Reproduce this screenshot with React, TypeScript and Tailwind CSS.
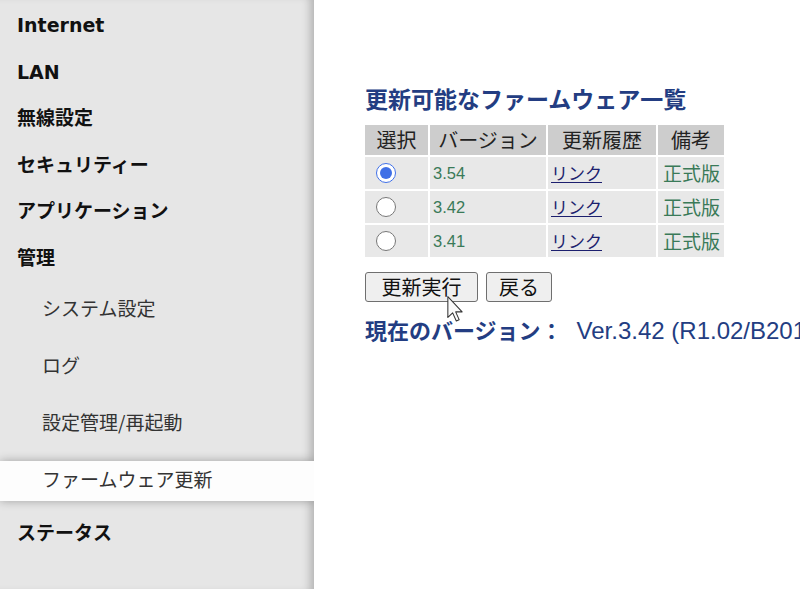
const topItems = ["Internet", "LAN", "無線設定", "セキュリティー", "アプリケーション", "管理"]
const subItems = ["システム設定", "ログ", "設定管理/再起動", "ファームウェア更新"]

const firmwares = [
  { ver: "3.54", checked: true },
  { ver: "3.42", checked: false },
  { ver: "3.41", checked: false },
]

function Cursor() {
  return (
    <svg
      className="pointer-events-none absolute left-[447px] top-[296px]"
      width="16"
      height="26"
      viewBox="0 0 12 20"
    >
      <path
        d="M0.5 0.5 L0.5 16.5 L4.2 13 L7 19.2 L9.2 18.2 L6.5 12.2 L11.5 12.2 Z"
        fill="#fafafa"
        stroke="#333"
        strokeWidth="0.8"
        strokeLinejoin="round"
      />
    </svg>
  )
}

export default function App() {
  return (
    <div className="relative flex h-[589px] w-[800px] overflow-hidden bg-white font-['Noto_Sans_CJK_JP',sans-serif]">
      {/* Sidebar */}
      <aside className="h-full w-[314px] shrink-0 overflow-hidden bg-[#e6e6e6] shadow-[inset_-9px_0_8px_-5px_rgba(0,0,0,0.22)]">
        <div className="pt-[2px]">
          {topItems.map((item) => (
            <div
              key={item}
              className="flex h-[46.5px] items-center pl-[17px] font-['DejaVu_Sans','Noto_Sans_CJK_JP',sans-serif] text-[19px] font-bold text-[#111]"
            >
              {item}
            </div>
          ))}
        </div>
        {subItems.map((item, i) => {
          const active = i === subItems.length - 1
          return (
            <div key={item} className="py-[8.5px]">
              <div
                className={
                  active
                    ? "relative z-10 flex h-[40px] items-center bg-[#fdfdfd] pb-[2px] pl-[42px] text-[19px] text-[#333] shadow-[0_0_9px_rgba(0,0,0,0.3)]"
                    : "flex h-[40px] items-center pb-[2px] pl-[42px] text-[19px] text-[#333]"
                }
              >
                {item}
              </div>
            </div>
          )
        })}
        <div className="flex h-[46px] items-center pl-[17px] text-[19px] font-bold text-[#111]">
          ステータス
        </div>
      </aside>

      {/* Main */}
      <main className="whitespace-nowrap pl-[51px] pt-[83px]">
        <h2 className="text-[23px] font-bold leading-[30px] text-[#233d82]">
          更新可能なファームウェア一覧
        </h2>

        <table className="mt-[10px] -ml-[2px] border-separate border-spacing-[2px]">
          <thead>
            <tr className="bg-[#cdcdcd] text-[20px] text-[#222]">
              <th className="h-[29px] w-[63px] p-0 font-normal">選択</th>
              <th className="w-[116px] p-0 font-normal">バージョン</th>
              <th className="w-[108px] p-0 font-normal">更新履歴</th>
              <th className="w-[66px] p-0 font-normal">備考</th>
            </tr>
          </thead>
          <tbody>
            {firmwares.map((f) => (
              <tr key={f.ver} className="h-[32px] bg-[#e8e8e8]">
                <td className="p-0 pl-[11px] align-middle">
                  <input
                    type="radio"
                    name="fw"
                    defaultChecked={f.checked}
                    className="m-0 block h-[20px] w-[20px] accent-[#3f6fe6]"
                  />
                </td>
                <td className="p-0 pl-[3px] font-['Liberation_Sans',sans-serif] text-[16.5px] text-[#3a7a58]">
                  {f.ver}
                </td>
                <td className="p-0 pl-[3px] text-[17px]">
                  <a href="#" className="text-[#1c1f6e] underline underline-offset-2">
                    リンク
                  </a>
                </td>
                <td className="p-0 pl-[5px] text-[19px] text-[#3a7a58]">正式版</td>
              </tr>
            ))}
          </tbody>
        </table>

        <div className="mt-[13px] flex gap-[8px]">
          <button className="h-[30px] w-[113px] rounded-[3px] border border-[#6f6f6f] bg-[#efefef] text-[20px] leading-none text-[#111]">
            更新実行
          </button>
          <button className="h-[30px] w-[66px] rounded-[3px] border border-[#6f6f6f] bg-[#efefef] text-[20px] leading-none text-[#111]">
            戻る
          </button>
        </div>

        <p className="mt-[12px] text-[22px] font-bold leading-[30px] text-[#233d82]">
          現在のバージョン：
          <span className="ml-[14px] font-['Liberation_Sans',sans-serif] text-[24px] font-normal">
            Ver.3.42 (R1.02/B2019)
          </span>
        </p>
      </main>

      <Cursor />
    </div>
  )
}
